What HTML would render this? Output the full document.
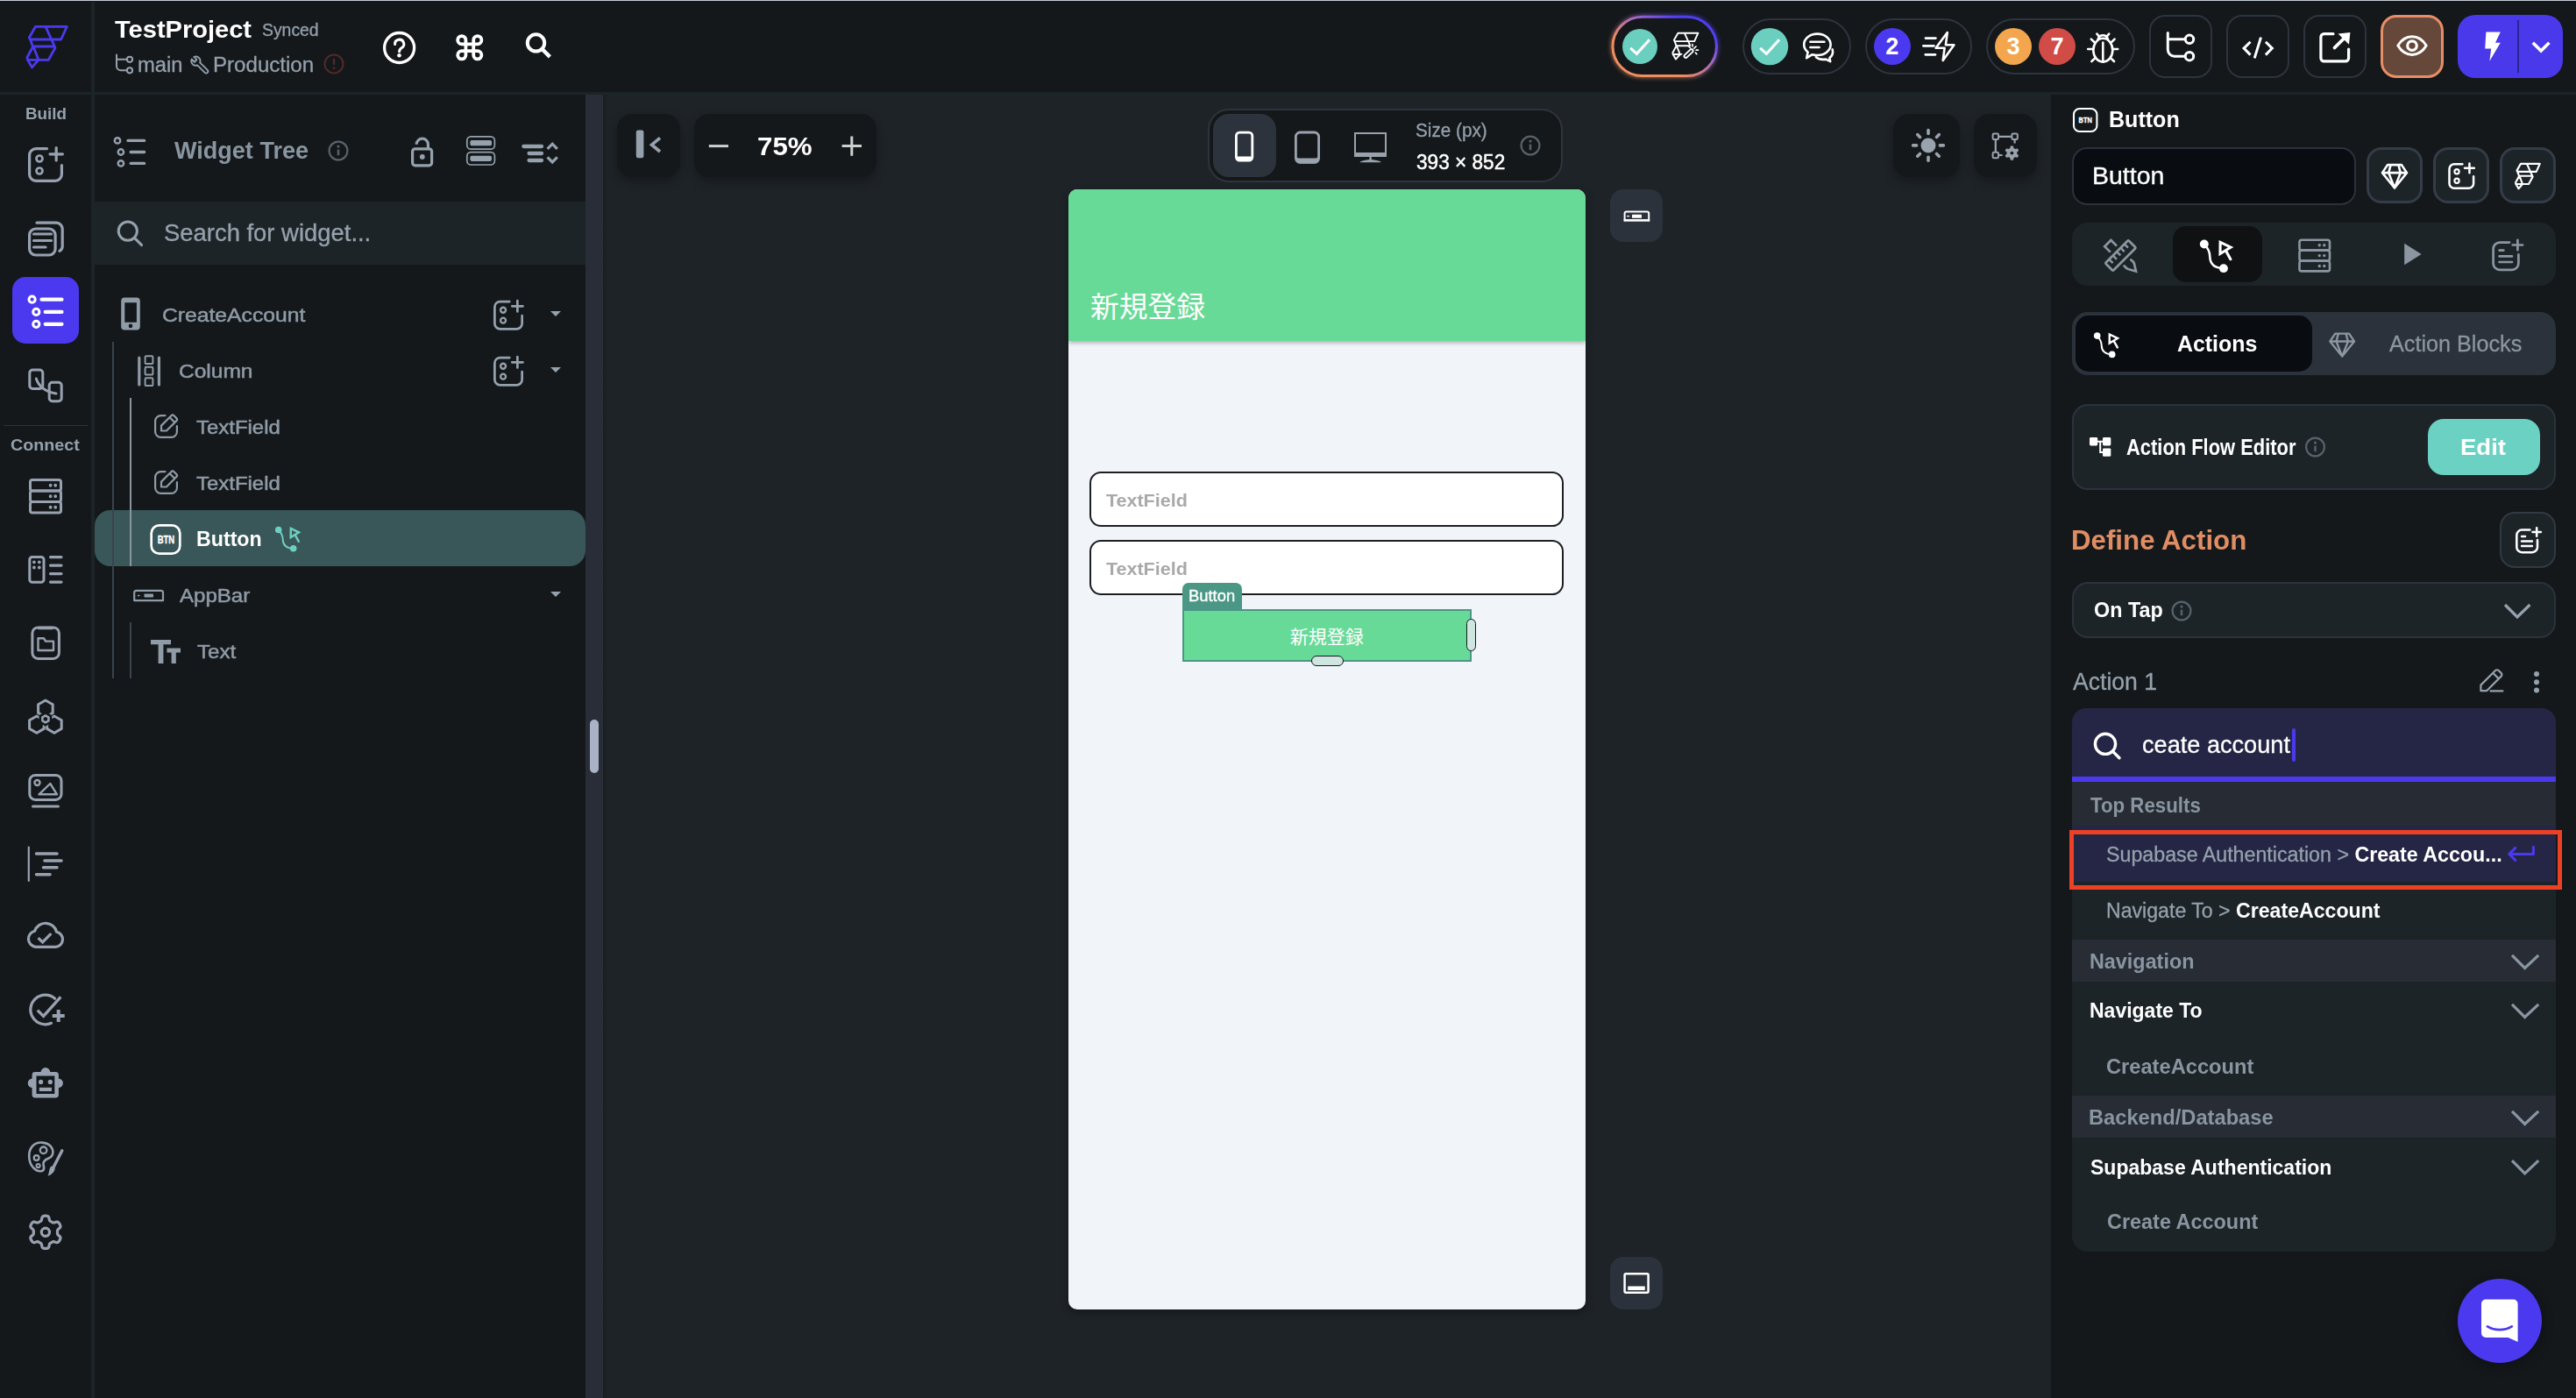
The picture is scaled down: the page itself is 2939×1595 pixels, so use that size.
<!DOCTYPE html>
<html lang="ja"><head><meta charset="utf-8"><title>FlutterFlow - TestProject</title>
<style>
html,body{margin:0;padding:0;}
body{width:2939px;height:1595px;overflow:hidden;background:#14181b;position:relative;font-family:"Liberation Sans",sans-serif;}
.b{position:absolute;}
.t{position:absolute;white-space:nowrap;}
#ic{position:absolute;left:0;top:0;}
</style></head><body>
<div class="b" style="left:0px;top:0px;width:2939px;height:1.2px;background:#c3cad2;"></div>
<div class="b" style="left:104px;top:1.5px;width:4px;height:1594px;background:#1d2428;"></div>
<div class="b" style="left:0px;top:105px;width:2939px;height:3px;background:#1d2428;"></div>
<div class="b" style="left:668px;top:108px;width:1672px;height:1487px;background:#1e2328;"></div>
<div class="b" style="left:668px;top:108px;width:20px;height:1487px;background:#282d37;"></div>
<div class="b" style="left:688px;top:108px;width:6px;height:1487px;background:linear-gradient(90deg,rgba(0,0,0,.14),rgba(0,0,0,0));"></div>
<div class="b" style="left:673px;top:821px;width:10px;height:61px;background:#aab3c5;border-radius:5px;"></div>
<div class="b" style="left:2340px;top:108px;width:599px;height:1487px;background:#14181b;"></div>
<div class="b" style="left:14px;top:316px;width:76px;height:76px;background:#4b39ef;border-radius:15px;"></div>
<div class="b" style="left:4px;top:484.5px;width:96px;height:1.6px;background:#2b323b;"></div>
<div class="b" style="left:108px;top:230px;width:560px;height:72px;background:#1d2428;"></div>
<div class="b" style="left:108px;top:582px;width:560px;height:64px;background:#395659;border-radius:18px 18px 18px 18px;"></div>
<div class="b" style="left:128.2px;top:390px;width:2px;height:384px;background:#3a434e;"></div>
<div class="b" style="left:148.3px;top:454px;width:2px;height:192px;background:#8a94a0;"></div>
<div class="b" style="left:148.3px;top:710px;width:2px;height:64px;background:#3a434e;"></div>
<div class="b" style="left:704px;top:130px;width:72px;height:72px;background:#14181b;border-radius:17px;box-shadow:0 5px 12px rgba(0,0,0,.28);"></div>
<div class="b" style="left:792px;top:130px;width:208px;height:72px;background:#14181b;border-radius:17px;box-shadow:0 5px 12px rgba(0,0,0,.28);"></div>
<div class="b" style="left:2160px;top:130px;width:76px;height:72px;background:#14181b;border-radius:18px;box-shadow:0 5px 12px rgba(0,0,0,.28);"></div>
<div class="b" style="left:2252px;top:130px;width:72px;height:72px;background:#14181b;border-radius:18px;box-shadow:0 5px 12px rgba(0,0,0,.28);"></div>
<div class="b" style="left:1378px;top:124px;width:405px;height:84px;background:#14181b;border-radius:24px;border:2px solid #2e343d;box-sizing:border-box;"></div>
<div class="b" style="left:1383.5px;top:130px;width:72px;height:72px;background:#2d333d;border-radius:18px;"></div>
<div class="b" style="left:1837px;top:216px;width:60px;height:60px;background:#2c323c;border-radius:15px;"></div>
<div class="b" style="left:1837px;top:1434px;width:60px;height:60px;background:#2c323c;border-radius:15px;"></div>
<div class="b" style="left:1219px;top:216px;width:590px;height:1278px;background:#f1f4f8;border-radius:10px;box-shadow:0 3px 10px rgba(0,0,0,.35);overflow:hidden;"><div style="position:absolute;left:0;top:0;width:590px;height:172.5px;background:#68da97;box-shadow:0 2px 5px rgba(0,0,0,.3)"></div></div>
<div class="b" style="left:1243px;top:538px;width:541px;height:63px;background:#fff;border-radius:13px;border:2px solid #1c1f22;box-sizing:border-box;"></div>
<div class="b" style="left:1243px;top:616px;width:541px;height:63px;background:#fff;border-radius:13px;border:2px solid #1c1f22;box-sizing:border-box;"></div>
<div class="b" style="left:1349px;top:664.5px;width:67.5px;height:32px;background:#4b9786;border-radius:7px 7px 0 0;"></div>
<div class="b" style="left:1349px;top:694.5px;width:330px;height:60px;background:#68da97;border:2.5px solid #4b9786;box-sizing:border-box;"></div>
<div class="b" style="left:1672.5px;top:706px;width:11.5px;height:37px;background:#cfe5e0;border-radius:6px;border:1.5px solid #0f1a1a;box-sizing:border-box;"></div>
<div class="b" style="left:1495.5px;top:748px;width:37px;height:11.5px;background:#cfe5e0;border-radius:6px;border:1.5px solid #0f1a1a;box-sizing:border-box;"></div>
<div class="b" style="left:1988px;top:21px;width:124px;height:64px;border-radius:32px;border:2px solid #2d343d;box-sizing:border-box;"></div>
<div class="b" style="left:2128px;top:21px;width:122px;height:64px;border-radius:32px;border:2px solid #2d343d;box-sizing:border-box;"></div>
<div class="b" style="left:2266px;top:21px;width:170px;height:64px;border-radius:32px;border:2px solid #2d343d;box-sizing:border-box;"></div>
<div class="b" style="left:2452px;top:17px;width:72px;height:72px;border-radius:18px;border:2px solid #2d343d;box-sizing:border-box;"></div>
<div class="b" style="left:2540px;top:17px;width:72px;height:72px;border-radius:18px;border:2px solid #2d343d;box-sizing:border-box;"></div>
<div class="b" style="left:2628px;top:17px;width:72px;height:72px;border-radius:18px;border:2px solid #2d343d;box-sizing:border-box;"></div>
<div class="b" style="left:2716px;top:17px;width:72px;height:72px;background:#65483a;border-radius:18px;border:3px solid #e88e66;box-sizing:border-box;"></div>
<div class="b" style="left:2804px;top:17px;width:120px;height:72px;background:#4939ea;border-radius:20px;"></div>
<div class="b" style="left:2872px;top:22.5px;width:2px;height:60px;background:#2c2494;"></div>
<div class="b" style="left:2137.8px;top:31.9px;width:42px;height:42px;background:#4b39ef;border-radius:21px;"></div>
<div class="b" style="left:2276px;top:31.9px;width:42px;height:42px;background:#f3a64e;border-radius:21px;"></div>
<div class="b" style="left:2326px;top:31.9px;width:42px;height:42px;background:#d14c47;border-radius:21px;"></div>
<div class="b" style="left:2364px;top:168px;width:324px;height:65.5px;background:#090d11;border-radius:17px;border:2px solid #2b323b;box-sizing:border-box;"></div>
<div class="b" style="left:2700px;top:168px;width:64px;height:64px;background:#1d2428;border-radius:17px;border:3px solid #353c47;box-sizing:border-box;"></div>
<div class="b" style="left:2776px;top:168px;width:64px;height:64px;background:#1d2428;border-radius:17px;border:3px solid #353c47;box-sizing:border-box;"></div>
<div class="b" style="left:2852px;top:168px;width:64px;height:64px;background:#1d2428;border-radius:17px;border:3px solid #353c47;box-sizing:border-box;"></div>
<div class="b" style="left:2364px;top:254px;width:552px;height:72px;background:#1d2428;border-radius:18px;"></div>
<div class="b" style="left:2478.5px;top:258px;width:102.5px;height:64px;background:#0f1113;border-radius:15px;"></div>
<div class="b" style="left:2364px;top:356px;width:552px;height:72px;background:#2c323b;border-radius:18px;"></div>
<div class="b" style="left:2368px;top:360px;width:270px;height:64px;background:#090c10;border-radius:15px;"></div>
<div class="b" style="left:2364px;top:460.5px;width:552px;height:98.5px;background:#1d2428;border-radius:18px;border:2px solid #2b323b;box-sizing:border-box;"></div>
<div class="b" style="left:2770px;top:478px;width:128px;height:64px;background:#6bd1c2;border-radius:18px;"></div>
<div class="b" style="left:2852px;top:584px;width:64px;height:64px;background:#1d2428;border-radius:17px;border:2.5px solid #323943;box-sizing:border-box;"></div>
<div class="b" style="left:2364px;top:664px;width:552px;height:64px;background:#1d2428;border-radius:18px;border:2px solid #2b323b;box-sizing:border-box;"></div>
<div class="b" style="left:2364px;top:808px;width:552px;height:620px;background:#1d2428;border-radius:16px 16px 18px 18px;overflow:hidden;"><div style="position:absolute;left:0;top:0;width:552px;height:78px;background:#252645"></div><div style="position:absolute;left:0;top:78px;width:552px;height:6px;background:#4b39ef"></div><div style="position:absolute;left:0;top:84px;width:552px;height:50px;background:#272c34"></div><div style="position:absolute;left:0;top:134px;width:552px;height:64px;background:#252645"></div><div style="position:absolute;left:0;top:263.5px;width:552px;height:48.5px;background:#272c35"></div><div style="position:absolute;left:0;top:442px;width:552px;height:48px;background:#272c35"></div></div>
<div class="b" style="left:2615.3px;top:831px;width:3.6px;height:37.5px;background:#4b39ef;border-radius:2px;"></div>
<div class="b" style="left:2361px;top:947px;width:562px;height:68px;border:5px solid #ec4125;box-sizing:border-box;"></div>
<div class="b" style="left:2804px;top:1458.6px;width:96px;height:96px;background:#4b39ef;border-radius:48px;box-shadow:0 3px 14px rgba(0,0,0,.3);"></div>
<div class="t" style="top:20px;font-size:28px;line-height:28px;color:#fff;font-weight:700;left:131.00px;transform:scaleX(1.0371);transform-origin:0 50%;"><span id="t_proj">TestProject</span></div>
<div class="t" style="top:24px;font-size:20px;line-height:20px;color:#95a1ac;-webkit-text-stroke:0.3px #95a1ac;left:299.17px;transform:scaleX(0.9691);transform-origin:0 50%;"><span id="t_sync">Synced</span></div>
<div class="t" style="top:63px;font-size:23.5px;line-height:23.5px;color:#95a1ac;-webkit-text-stroke:0.3px #95a1ac;left:157.36px;transform:scaleX(1.0107);transform-origin:0 50%;"><span id="t_main">main</span></div>
<div class="t" style="top:63px;font-size:23.5px;line-height:23.5px;color:#95a1ac;-webkit-text-stroke:0.3px #95a1ac;left:242.68px;transform:scaleX(1.0249);transform-origin:0 50%;"><span id="t_prod">Production</span></div>
<div class="t" style="top:120px;font-size:19px;line-height:19px;color:#95a1ac;font-weight:700;left:28.90px;transform:scaleX(0.9890);transform-origin:0 50%;"><span id="t_build">Build</span></div>
<div class="t" style="top:498px;font-size:19px;line-height:19px;color:#95a1ac;font-weight:700;left:12.19px;transform:scaleX(1.0370);transform-origin:0 50%;"><span id="t_conn">Connect</span></div>
<div class="t" style="top:159px;font-size:27px;line-height:27px;color:#8995a0;font-weight:700;left:199.00px;transform:scaleX(1.0015);transform-origin:0 50%;"><span id="t_wt">Widget Tree</span></div>
<div class="t" style="top:253px;font-size:27px;line-height:27px;color:#95a1ac;-webkit-text-stroke:0.3px #95a1ac;left:187.19px;transform:scaleX(1.0156);transform-origin:0 50%;"><span id="t_sfw">Search for widget...</span></div>
<div class="t" style="top:349px;font-size:22px;line-height:22px;color:#8f9ba6;-webkit-text-stroke:0.5px #8f9ba6;left:185.42px;transform:scaleX(1.1222);transform-origin:0 50%;"><span id="t_r1">CreateAccount</span></div>
<div class="t" style="top:413px;font-size:22px;line-height:22px;color:#8f9ba6;-webkit-text-stroke:0.5px #8f9ba6;left:204.39px;transform:scaleX(1.1139);transform-origin:0 50%;"><span id="t_r2">Column</span></div>
<div class="t" style="top:477px;font-size:22px;line-height:22px;color:#8f9ba6;-webkit-text-stroke:0.5px #8f9ba6;left:224.00px;transform:scaleX(1.0882);transform-origin:0 50%;"><span id="t_r3">TextField</span></div>
<div class="t" style="top:541px;font-size:22px;line-height:22px;color:#8f9ba6;-webkit-text-stroke:0.5px #8f9ba6;left:224.00px;transform:scaleX(1.0882);transform-origin:0 50%;"><span id="t_r4">TextField</span></div>
<div class="t" style="top:604px;font-size:23px;line-height:23px;color:#fff;font-weight:700;left:223.92px;transform:scaleX(1.0086);transform-origin:0 50%;"><span id="t_r5">Button</span></div>
<div class="t" style="top:669px;font-size:22px;line-height:22px;color:#8f9ba6;-webkit-text-stroke:0.5px #8f9ba6;left:204.98px;transform:scaleX(1.0934);transform-origin:0 50%;"><span id="t_r6">AppBar</span></div>
<div class="t" style="top:733px;font-size:22px;line-height:22px;color:#8f9ba6;-webkit-text-stroke:0.5px #8f9ba6;left:224.76px;transform:scaleX(1.0963);transform-origin:0 50%;"><span id="t_r7">Text</span></div>
<div class="t" style="top:152px;font-size:29.5px;line-height:29.5px;color:#fff;font-weight:700;left:864.43px;transform:scaleX(1.0604);transform-origin:0 50%;"><span id="t_zoom">75%</span></div>
<div class="t" style="top:139px;font-size:21.5px;line-height:21.5px;color:#95a1ac;-webkit-text-stroke:0.3px #95a1ac;left:1614.67px;transform:scaleX(0.9624);transform-origin:0 50%;"><span id="t_size">Size (px)</span></div>
<div class="t" style="top:174px;font-size:23px;line-height:23px;color:#fff;-webkit-text-stroke:0.5px #fff;left:1615.50px;transform:scaleX(0.9838);transform-origin:0 50%;"><span id="t_dim">393 &#215; 852</span></div>
<div class="t" style="top:335px;font-size:32.8px;line-height:32.8px;color:#fff;letter-spacing:-0.062px;font-family:'Liberation Sans','Noto Sans CJK JP',sans-serif;left:1244.00px;"><span id="t_appbar">新規登録</span></div>
<div class="t" style="top:561px;font-size:20px;line-height:20px;color:#a9a9a9;font-weight:700;left:1262.00px;transform:scaleX(1.0753);transform-origin:0 50%;"><span id="t_tf1">TextField</span></div>
<div class="t" style="top:639px;font-size:20px;line-height:20px;color:#a9a9a9;font-weight:700;left:1262.00px;transform:scaleX(1.0753);transform-origin:0 50%;"><span id="t_tf2">TextField</span></div>
<div class="t" style="top:672px;font-size:17.5px;line-height:17.5px;color:#fff;-webkit-text-stroke:0.35px #fff;left:1355.64px;transform:scaleX(1.0502);transform-origin:0 50%;"><span id="t_tag">Button</span></div>
<div class="t" style="top:716px;font-size:21px;line-height:21px;color:#fff;font-family:'Liberation Sans','Noto Sans CJK JP',sans-serif;left:1471.80px;"><span id="t_btn">新規登録</span></div>
<div class="t" style="top:124px;font-size:25px;line-height:25px;color:#fff;font-weight:700;left:2405.92px;transform:scaleX(1.0022);transform-origin:0 50%;"><span id="t_hdr">Button</span></div>
<div class="t" style="top:188px;font-size:27px;line-height:27px;color:#fff;-webkit-text-stroke:0.3px #fff;left:2387.32px;transform:scaleX(1.0547);transform-origin:0 50%;"><span id="t_inp">Button</span></div>
<div class="t" style="top:379px;font-size:26px;line-height:26px;color:#fff;font-weight:700;left:2484.00px;transform:scaleX(0.9576);transform-origin:0 50%;"><span id="t_act">Actions</span></div>
<div class="t" style="top:379px;font-size:26px;line-height:26px;color:#8b96a1;-webkit-text-stroke:0.3px #8b96a1;left:2726.02px;transform:scaleX(0.9693);transform-origin:0 50%;"><span id="t_ab">Action Blocks</span></div>
<div class="t" style="top:498px;font-size:25px;line-height:25px;color:#fff;font-weight:700;left:2426.02px;transform:scaleX(0.8762);transform-origin:0 50%;"><span id="t_afe">Action Flow Editor</span></div>
<div class="t" style="top:497px;font-size:26.5px;line-height:26.5px;color:#fff;font-weight:700;left:2807.24px;transform:scaleX(1.0393);transform-origin:0 50%;"><span id="t_edit">Edit</span></div>
<div class="t" style="top:601px;font-size:31px;line-height:31px;color:#e08d63;font-weight:700;left:2363.37px;transform:scaleX(1.0081);transform-origin:0 50%;"><span id="t_def">Define Action</span></div>
<div class="t" style="top:685px;font-size:23.5px;line-height:23.5px;color:#fff;font-weight:700;left:2389.18px;transform:scaleX(0.9929);transform-origin:0 50%;"><span id="t_tap">On Tap</span></div>
<div class="t" style="top:765px;font-size:27px;line-height:27px;color:#95a1ac;-webkit-text-stroke:0.3px #95a1ac;left:2364.76px;transform:scaleX(0.9844);transform-origin:0 50%;"><span id="t_a1">Action 1</span></div>
<div class="t" style="top:836px;font-size:27.5px;line-height:27.5px;color:#fff;-webkit-text-stroke:0.3px #fff;left:2443.70px;transform:scaleX(0.9865);transform-origin:0 50%;"><span id="t_q">ceate account</span></div>
<div class="t" style="top:908px;font-size:23px;line-height:23px;color:#8995a0;font-weight:700;left:2384.50px;transform:scaleX(0.9682);transform-origin:0 50%;"><span id="t_top">Top Results</span></div>
<div class="t" style="top:964px;font-size:23px;line-height:23px;color:#95a1ac;left:2403.20px;transform:scaleX(1.0096);transform-origin:0 50%;"><span id="t_l1"><span style="-webkit-text-stroke:.3px #95a1ac">Supabase Authentication &gt; </span><b style="color:#fff">Create Accou...</b></span></div>
<div class="t" style="top:1028px;font-size:23px;line-height:23px;color:#95a1ac;left:2403.20px;transform:scaleX(1.0053);transform-origin:0 50%;"><span id="t_l2"><span style="-webkit-text-stroke:.3px #95a1ac">Navigate To &gt; </span><b style="color:#fff">CreateAccount</b></span></div>
<div class="t" style="top:1086px;font-size:23px;line-height:23px;color:#8995a0;font-weight:700;left:2384.18px;transform:scaleX(1.0159);transform-origin:0 50%;"><span id="t_nav">Navigation</span></div>
<div class="t" style="top:1142px;font-size:23px;line-height:23px;color:#fff;font-weight:700;left:2384.18px;transform:scaleX(0.9997);transform-origin:0 50%;"><span id="t_nt">Navigate To</span></div>
<div class="t" style="top:1206px;font-size:23px;line-height:23px;color:#8995a0;font-weight:700;left:2403.20px;transform:scaleX(1.0288);transform-origin:0 50%;"><span id="t_ca">CreateAccount</span></div>
<div class="t" style="top:1264px;font-size:23px;line-height:23px;color:#8995a0;font-weight:700;left:2383.41px;transform:scaleX(1.0297);transform-origin:0 50%;"><span id="t_bd">Backend/Database</span></div>
<div class="t" style="top:1321px;font-size:23px;line-height:23px;color:#fff;font-weight:700;left:2385.00px;transform:scaleX(1.0004);transform-origin:0 50%;"><span id="t_sa">Supabase Authentication</span></div>
<div class="t" style="top:1383px;font-size:23px;line-height:23px;color:#8995a0;font-weight:700;left:2403.69px;transform:scaleX(1.0187);transform-origin:0 50%;"><span id="t_ca2">Create Account</span></div>
<div class="t" style="top:40px;font-size:27px;line-height:27px;color:#fff;font-weight:700;left:1858.8000000000002px;width:600px;text-align:center;"><span id="t_n2">2</span></div>
<div class="t" style="top:40px;font-size:27px;line-height:27px;color:#fff;font-weight:700;left:1997px;width:600px;text-align:center;"><span id="t_n3">3</span></div>
<div class="t" style="top:40px;font-size:27px;line-height:27px;color:#fff;font-weight:700;left:2047px;width:600px;text-align:center;"><span id="t_n7">7</span></div>
<svg id="ic" width="2939" height="1595" viewBox="0 0 2939 1595" fill="none" stroke-linecap="round" stroke-linejoin="round" font-family="Liberation Sans, sans-serif">
<defs>
<linearGradient id="pg" x1="0" y1="1" x2="1" y2="0"><stop offset="0" stop-color="#f0905f"/><stop offset=".33" stop-color="#ee8b60"/><stop offset=".62" stop-color="#9a63c8"/><stop offset=".8" stop-color="#5340f0"/><stop offset="1" stop-color="#4b39ef"/></linearGradient>
<filter id="bl" x="-20%" y="-30%" width="140%" height="160%"><feGaussianBlur stdDeviation="2.6"/></filter>
</defs>
<path d="M40.5 30.3H76.3L69.7 45H34.5L33.3 43Z M52 30.3L63 54.5 55.4 68.3H31.5L31 65.5 37.5 53.3 34.5 45 M37.5 53H62.3 M39 55.5L44 68.3 36.5 76.9 31.5 68.3" stroke="#4b39ef" stroke-width="2.8" fill="none" />
<g transform="translate(32 168) scale(1.0)">
<path d="M21.5 1.6H9A7.4 7.4 0 0 0 1.6 9V31A7.4 7.4 0 0 0 9 38.4H31A7.4 7.4 0 0 0 38.4 31V20.5" stroke="#98a1b0" stroke-width="3.2" fill="none" />
<circle cx="13" cy="13" r="3.5" stroke="#98a1b0" stroke-width="2.72" fill="none" />
<circle cx="13" cy="27" r="3.5" stroke="#98a1b0" stroke-width="2.72" fill="none" />
<path d="M32.2 .6V15 M25 7.8H39.4" stroke="#98a1b0" stroke-width="3.2" fill="none" />
</g>
<g transform="translate(563 342.7) scale(0.85)">
<path d="M21.5 1.6H9A7.4 7.4 0 0 0 1.6 9V31A7.4 7.4 0 0 0 9 38.4H31A7.4 7.4 0 0 0 38.4 31V20.5" stroke="#95a1ac" stroke-width="3.2" fill="none" />
<circle cx="13" cy="13" r="3.5" stroke="#95a1ac" stroke-width="2.72" fill="none" />
<circle cx="13" cy="27" r="3.5" stroke="#95a1ac" stroke-width="2.72" fill="none" />
<path d="M32.2 .6V15 M25 7.8H39.4" stroke="#95a1ac" stroke-width="3.2" fill="none" />
</g>
<g transform="translate(563 406.7) scale(0.85)">
<path d="M21.5 1.6H9A7.4 7.4 0 0 0 1.6 9V31A7.4 7.4 0 0 0 9 38.4H31A7.4 7.4 0 0 0 38.4 31V20.5" stroke="#95a1ac" stroke-width="3.2" fill="none" />
<circle cx="13" cy="13" r="3.5" stroke="#95a1ac" stroke-width="2.72" fill="none" />
<circle cx="13" cy="27" r="3.5" stroke="#95a1ac" stroke-width="2.72" fill="none" />
<path d="M32.2 .6V15 M25 7.8H39.4" stroke="#95a1ac" stroke-width="3.2" fill="none" />
</g>
<g transform="translate(2793.3 186) scale(0.75)">
<path d="M21.5 1.6H9A7.4 7.4 0 0 0 1.6 9V31A7.4 7.4 0 0 0 9 38.4H31A7.4 7.4 0 0 0 38.4 31V20.5" stroke="#fff" stroke-width="3.3600000000000003" fill="none" />
<circle cx="13" cy="13" r="3.5" stroke="#fff" stroke-width="2.8560000000000003" fill="none" />
<circle cx="13" cy="27" r="3.5" stroke="#fff" stroke-width="2.8560000000000003" fill="none" />
<path d="M32.2 .6V15 M25 7.8H39.4" stroke="#fff" stroke-width="3.3600000000000003" fill="none" />
</g>
<rect x="33.6" y="261" width="29.5" height="30" rx="7" stroke="#98a1b0" stroke-width="3.2" fill="none" />
<path d="M42 254.2H64.5A7 7 0 0 1 71.2 261V281A6 6 0 0 1 68 286.3" stroke="#98a1b0" stroke-width="3.2" fill="none" />
<path d="M38.5 267H58.5 M38.5 274.5H58.5 M38.5 282H52" stroke="#98a1b0" stroke-width="3.2" fill="none" />
<circle cx="36.6" cy="341.7" r="3.6" stroke="#fff" stroke-width="3" fill="none" />
<circle cx="41.3" cy="355.9" r="3.6" stroke="#fff" stroke-width="3" fill="none" />
<circle cx="41.3" cy="369.8" r="3.6" stroke="#fff" stroke-width="3" fill="none" />
<path d="M47.5 341.7H70.5 M51.7 355.9H70.5 M51.7 369.8H70.5" stroke="#fff" stroke-width="4.2" fill="none" />
<circle cx="134" cy="160.4" r="3.2" stroke="#95a1ac" stroke-width="2.4" fill="none" />
<circle cx="137.9" cy="173.5" r="3.2" stroke="#95a1ac" stroke-width="2.4" fill="none" />
<circle cx="137.9" cy="186.4" r="3.2" stroke="#95a1ac" stroke-width="2.4" fill="none" />
<path d="M146 160.4H164.6 M149.2 173.5H164.6 M149.2 186.4H164.6" stroke="#95a1ac" stroke-width="3.4" fill="none" />
<rect x="33.8" y="422" width="15" height="21.5" rx="3.5" stroke="#98a1b0" stroke-width="3" fill="none" />
<rect x="56.2" y="436.2" width="14" height="21.5" rx="3.5" stroke="#98a1b0" stroke-width="3" fill="none" />
<path d="M41.3 432Q46 446 64 449" stroke="#98a1b0" stroke-width="3" fill="none" />
<rect x="34.5" y="547.5" width="35" height="12.5" rx="2.5" stroke="#98a1b0" stroke-width="3" fill="none" />
<path d="M57.6 553.75m-1.9 0a1.9 1.9 0 1 0 3.8 0a1.9 1.9 0 1 0 -3.8 0 M63.2 553.75m-1.9 0a1.9 1.9 0 1 0 3.8 0a1.9 1.9 0 1 0 -3.8 0" fill="#98a1b0" stroke="none" />
<rect x="34.5" y="560.0" width="35" height="12.5" rx="2.5" stroke="#98a1b0" stroke-width="3" fill="none" />
<path d="M57.6 566.25m-1.9 0a1.9 1.9 0 1 0 3.8 0a1.9 1.9 0 1 0 -3.8 0 M63.2 566.25m-1.9 0a1.9 1.9 0 1 0 3.8 0a1.9 1.9 0 1 0 -3.8 0" fill="#98a1b0" stroke="none" />
<rect x="34.5" y="572.5" width="35" height="12.5" rx="2.5" stroke="#98a1b0" stroke-width="3" fill="none" />
<path d="M57.6 578.75m-1.9 0a1.9 1.9 0 1 0 3.8 0a1.9 1.9 0 1 0 -3.8 0 M63.2 578.75m-1.9 0a1.9 1.9 0 1 0 3.8 0a1.9 1.9 0 1 0 -3.8 0" fill="#98a1b0" stroke="none" />
<rect x="2623.5" y="273.8" width="34.5" height="11.866666666666667" rx="2.5" stroke="#8b96a1" stroke-width="2.6" fill="none" />
<path d="M2646.27 279.73333333333335m-1.7 0a1.7 1.7 0 1 0 3.4 0a1.7 1.7 0 1 0 -3.4 0 M2651.79 279.73333333333335m-1.7 0a1.7 1.7 0 1 0 3.4 0a1.7 1.7 0 1 0 -3.4 0" fill="#8b96a1" stroke="none" />
<rect x="2623.5" y="285.6666666666667" width="34.5" height="11.866666666666667" rx="2.5" stroke="#8b96a1" stroke-width="2.6" fill="none" />
<path d="M2646.27 291.6m-1.7 0a1.7 1.7 0 1 0 3.4 0a1.7 1.7 0 1 0 -3.4 0 M2651.79 291.6m-1.7 0a1.7 1.7 0 1 0 3.4 0a1.7 1.7 0 1 0 -3.4 0" fill="#8b96a1" stroke="none" />
<rect x="2623.5" y="297.53333333333336" width="34.5" height="11.866666666666667" rx="2.5" stroke="#8b96a1" stroke-width="2.6" fill="none" />
<path d="M2646.27 303.4666666666667m-1.7 0a1.7 1.7 0 1 0 3.4 0a1.7 1.7 0 1 0 -3.4 0 M2651.79 303.4666666666667m-1.7 0a1.7 1.7 0 1 0 3.4 0a1.7 1.7 0 1 0 -3.4 0" fill="#8b96a1" stroke="none" />
<rect x="33.8" y="635.5" width="16.2" height="28.8" rx="3" stroke="#98a1b0" stroke-width="3" fill="none" />
<path d="M38.9 641.3m-1.9 0a1.9 1.9 0 1 0 3.8 0a1.9 1.9 0 1 0 -3.8 0 M44.8 641.3m-1.9 0a1.9 1.9 0 1 0 3.8 0a1.9 1.9 0 1 0 -3.8 0 M38.9 647.5m-1.9 0a1.9 1.9 0 1 0 3.8 0a1.9 1.9 0 1 0 -3.8 0 M44.8 647.5m-1.9 0a1.9 1.9 0 1 0 3.8 0a1.9 1.9 0 1 0 -3.8 0" fill="#98a1b0" stroke="none" />
<path d="M57.5 635.6H70 M57.5 645.1H70 M57.5 654.6H70 M57.5 664.1H70" stroke="#98a1b0" stroke-width="3.2" fill="none" />
<rect x="36.9" y="715.9" width="30.5" height="35.5" rx="6.5" stroke="#98a1b0" stroke-width="3" fill="none" />
<path d="M44.5 716.5H59.5" stroke="#98a1b0" stroke-width="3.4" fill="none" />
<path d="M43.5 742V728.2H50L52 731.6H61V742Z" stroke="#98a1b0" stroke-width="2.4" fill="none" />
<path d="M51.9 799.0L60.2 803.8L60.2 813.4L51.9 818.2L43.6 813.4L43.6 803.8Z" stroke="#98a1b0" stroke-width="3" fill="none" />
<path d="M41.9 817.0L50.2 821.8L50.2 831.4L41.9 836.2L33.6 831.4L33.6 821.8Z" stroke="#98a1b0" stroke-width="3" fill="none" />
<path d="M61.9 817.0L70.2 821.8L70.2 831.4L61.9 836.2L53.6 831.4L53.6 821.8Z" stroke="#98a1b0" stroke-width="3" fill="none" />
<path d="M51.9 813.7L57.6 817.0L57.6 823.6L51.9 826.9L46.2 823.6L46.2 817.0Z" stroke="#14181b" stroke-width="3.4" fill="#14181b" />
<path d="M51.9 816.3L55.4 818.3L55.4 822.3L51.9 824.3L48.4 822.3L48.4 818.3Z" stroke="#98a1b0" stroke-width="2.6" fill="none" />
<rect x="33.8" y="884.4" width="36.2" height="28" rx="6.5" stroke="#98a1b0" stroke-width="3" fill="none" />
<circle cx="42.5" cy="893" r="3" stroke="#98a1b0" stroke-width="2.4" fill="none" />
<path d="M44.5 906.3L57.3 894 65 906.3Z" stroke="#98a1b0" stroke-width="2.4" fill="none" />
<path d="M37.5 920H66.5" stroke="#98a1b0" stroke-width="3" fill="none" />
<path d="M32.8 966.5V1005" stroke="#98a1b0" stroke-width="2.2" fill="none" />
<path d="M41.5 974H65 M51 982H70 M49.5 989.8H65 M41.5 997.8H57" stroke="#98a1b0" stroke-width="3.6" fill="none" />
<path d="M40.5 1080.3H63.5A8.6 8.6 0 0 0 64.6 1063.3A13 13 0 0 0 39.6 1062.2A9.2 9.2 0 0 0 40.5 1080.3Z" stroke="#98a1b0" stroke-width="3.2" fill="none" />
<path d="M43.6 1070.2L48.6 1075 58.3 1065.2" stroke="#98a1b0" stroke-width="3.2" fill="none" stroke-linecap="butt" stroke-linejoin="miter"/>
<path d="M62.6 1139.2A16.8 16.8 0 1 0 58.5 1167.3" stroke="#98a1b0" stroke-width="3.2" fill="none" />
<path d="M42.8 1152.6L49.6 1159.4 69.3 1137.4" stroke="#98a1b0" stroke-width="3.4" fill="none" stroke-linecap="butt" stroke-linejoin="miter"/>
<path d="M66.7 1152V1166 M59.7 1159H73.7" stroke="#98a1b0" stroke-width="4" fill="none" stroke-linecap="butt"/>
<path d="M40 1223H63.5A3.4 3.4 0 0 1 66.9 1226.4V1249A3.4 3.4 0 0 1 63.5 1252.4H40A3.4 3.4 0 0 1 36.6 1249V1226.4A3.4 3.4 0 0 1 40 1223Z M41.5 1227.5V1248H62.3V1227.5Z" fill="#98a1b0" stroke="none" fill-rule="evenodd"/>
<path d="M46.5 1223.5A5.4 5.4 0 0 1 57.3 1223.5Z" fill="#98a1b0" stroke="none" />
<path d="M37 1230.5A5.3 5.3 0 0 0 37 1241.1Z M66.6 1230.5A5.3 5.3 0 0 1 66.6 1241.1Z" fill="#98a1b0" stroke="none" />
<circle cx="46.6" cy="1234.4" r="2.6" stroke="none" stroke-width="0" fill="#98a1b0" />
<circle cx="57.3" cy="1234.4" r="2.6" stroke="none" stroke-width="0" fill="#98a1b0" />
<path d="M44.8 1240.8H59V1245H44.8Z" fill="#98a1b0" stroke="none" />
<path d="M48.5 1303.6C38 1302.5 33 1311 33.2 1319.5C33.5 1330 40.5 1336.5 46.5 1336.3C51.5 1336 50 1331 49.5 1328.5C49 1324.5 52 1322.8 55.5 1321.5C60 1319.8 61.5 1315.5 59.8 1311C58 1306.5 53.5 1304 48.5 1303.6Z" stroke="#98a1b0" stroke-width="2.6" fill="none" />
<circle cx="49.6" cy="1312.3" r="3.8" stroke="#98a1b0" stroke-width="2.3" fill="none" />
<circle cx="41.6" cy="1321" r="2.9" stroke="#98a1b0" stroke-width="2.2" fill="none" />
<circle cx="43.6" cy="1330" r="2.1" stroke="#98a1b0" stroke-width="2" fill="none" />
<path d="M70.8 1312.8L61.6 1330.6" stroke="#98a1b0" stroke-width="3.4" fill="none" />
<path d="M58.6 1330.6C61 1329.8 63.2 1331.4 62.6 1334C61.6 1338.2 57.6 1341 54.6 1341.4C56.4 1338.4 55.6 1333 58.6 1330.6Z" fill="#98a1b0" stroke="none" />
<path d="M51.9 1387.2L52.7 1387.2L53.5 1387.3L54.3 1387.5L55.1 1387.9L55.7 1388.8L56.1 1390.2L56.3 1391.7L56.7 1392.6L57.2 1393.1L57.7 1393.4L58.2 1393.7L58.7 1394.0L59.2 1394.3L59.7 1394.6L60.3 1394.9L60.9 1395.0L61.9 1394.9L63.3 1394.4L64.7 1394.0L65.8 1394.1L66.5 1394.6L67.1 1395.2L67.6 1395.8L68.0 1396.5L68.4 1397.2L68.7 1398.0L68.9 1398.7L69.0 1399.6L68.5 1400.6L67.5 1401.6L66.3 1402.6L65.7 1403.4L65.5 1404.0L65.5 1404.6L65.5 1405.2L65.5 1405.8L65.5 1406.4L65.5 1407.0L65.5 1407.6L65.7 1408.2L66.3 1409.0L67.5 1410.0L68.5 1411.0L69.0 1412.0L68.9 1412.9L68.7 1413.6L68.4 1414.4L68.0 1415.1L67.6 1415.8L67.1 1416.4L66.5 1417.0L65.8 1417.5L64.7 1417.6L63.3 1417.2L61.9 1416.7L60.9 1416.6L60.3 1416.7L59.7 1417.0L59.2 1417.3L58.7 1417.6L58.2 1417.9L57.7 1418.2L57.2 1418.5L56.7 1419.0L56.3 1419.9L56.1 1421.4L55.7 1422.8L55.1 1423.7L54.3 1424.1L53.5 1424.3L52.7 1424.4L51.9 1424.4L51.1 1424.4L50.3 1424.3L49.5 1424.1L48.7 1423.7L48.1 1422.8L47.7 1421.4L47.5 1419.9L47.1 1419.0L46.6 1418.5L46.1 1418.2L45.6 1417.9L45.1 1417.6L44.6 1417.3L44.1 1417.0L43.5 1416.7L42.9 1416.6L41.9 1416.7L40.5 1417.2L39.1 1417.6L38.0 1417.5L37.3 1417.0L36.7 1416.4L36.2 1415.8L35.8 1415.1L35.4 1414.4L35.1 1413.6L34.9 1412.9L34.8 1412.0L35.3 1411.0L36.3 1410.0L37.5 1409.0L38.1 1408.2L38.3 1407.6L38.3 1407.0L38.3 1406.4L38.3 1405.8L38.3 1405.2L38.3 1404.6L38.3 1404.0L38.1 1403.4L37.5 1402.6L36.3 1401.6L35.3 1400.6L34.8 1399.6L34.9 1398.7L35.1 1398.0L35.4 1397.2L35.8 1396.5L36.2 1395.8L36.7 1395.2L37.3 1394.6L38.0 1394.1L39.1 1394.0L40.5 1394.4L41.9 1394.9L42.9 1395.0L43.5 1394.9L44.1 1394.6L44.6 1394.3L45.1 1394.0L45.6 1393.7L46.1 1393.4L46.6 1393.1L47.1 1392.6L47.5 1391.7L47.7 1390.2L48.1 1388.8L48.7 1387.9L49.5 1387.5L50.3 1387.3L51.1 1387.2L51.9 1387.2Z" stroke="#98a1b0" stroke-width="3.2" fill="none" />
<circle cx="51.9" cy="1405.8" r="4.6" stroke="#98a1b0" stroke-width="3.2" fill="none" />
<path d="M133 62.6V75.3A5 5 0 0 0 138 80.3H144.6 M133 67.8H144.6" stroke="#95a1ac" stroke-width="2" fill="none" />
<circle cx="148" cy="67.8" r="3.1" stroke="#95a1ac" stroke-width="2" fill="none" />
<circle cx="148" cy="80.3" r="3.1" stroke="#95a1ac" stroke-width="2" fill="none" />
<path d="M226.4 72.6L235.2 81.4" stroke="#95a1ac" stroke-width="6" fill="none" />
<path d="M226.4 72.6L235.2 81.4" stroke="#14181b" stroke-width="2.4" fill="none" />
<path d="M221.32 64.84A5.2 5.2 0 1 1 218.64 67.52L221.85 70.73 224.53 68.05Z" stroke="#95a1ac" stroke-width="1.9" fill="#14181b" />
<path d="M225.6 71.8L227.6 73.8" stroke="#14181b" stroke-width="2.4" fill="none" />
<circle cx="381" cy="72.9" r="10.5" stroke="#532929" stroke-width="2" fill="none" />
<path d="M381 66.9V73.9" stroke="#532929" stroke-width="2.4" fill="none" stroke-linecap="butt"/>
<rect x="379.8" y="76.4" width="2.4" height="2.5" rx="0" stroke="none" stroke-width="0" fill="#532929" />
<circle cx="455.6" cy="54.5" r="17" stroke="#fff" stroke-width="3.3" fill="none" />
<path d="M450.6 50.6A5.1 5.1 0 1 1 458.4 54.6C456.4 55.9 455.6 56.8 455.6 58.8" stroke="#fff" stroke-width="3" fill="none" />
<circle cx="455.5" cy="63.2" r="2.3" stroke="none" stroke-width="0" fill="#fff" />
<path d="M531.4 50.3V45.699999999999996A4.6 4.6 0 1 0 526.8 50.3H544.8000000000001A4.6 4.6 0 1 0 540.2 45.699999999999996V62.800000000000004A4.6 4.6 0 1 0 544.8000000000001 58.2H526.8A4.6 4.6 0 1 0 531.4 62.800000000000004Z" stroke="#fff" stroke-width="3.8" fill="none" />
<circle cx="611.5" cy="48.9" r="9.7" stroke="#fff" stroke-width="4" fill="none" />
<path d="M618.8 56.3L627.4 64.9" stroke="#fff" stroke-width="4.4" fill="none" stroke-linecap="butt"/>
<rect x="1840" y="19.2" width="118.4" height="67.4" rx="33.7" stroke="url(#pg)" stroke-width="4" filter="url(#bl)" opacity=".75"/>
<rect x="1840" y="19.2" width="118.4" height="67.4" rx="33.7" stroke="url(#pg)" stroke-width="3" fill="#14181b"/>
<circle cx="1871" cy="53.1" r="20" stroke="none" stroke-width="0" fill="#6bcfc0" />
<path d="M1860.2 54.8L1867.4 61.4 1882 45.2" stroke="#fff" stroke-width="3.1" fill="none" stroke-linecap="butt" stroke-linejoin="miter"/>
<circle cx="2019" cy="53.1" r="21.2" stroke="none" stroke-width="0" fill="#6bcfc0" />
<path d="M2008.2 54.8L2015.4 61.4 2030 45.2" stroke="#fff" stroke-width="3.1" fill="none" stroke-linecap="butt" stroke-linejoin="miter"/>
<g transform="translate(1908.4 37.7) scale(.64) translate(-31 -30.3)">
<path d="M40.5 30.3H76.3L69.7 45H34.5L33.3 43Z M52 30.3L63 54.5 55.4 68.3H31.5L31 65.5 37.5 53.3 34.5 45 M37.5 53H62.3 M39 55.5L44 68.3 36.5 76.9 31.5 68.3" stroke="#fff" stroke-width="3" fill="none" />
</g>
<path d="M1921.6 66L1937.5 51" stroke="#14181b" stroke-width="9.5" fill="none" stroke-linecap="butt"/>
<path d="M1923.4 64L1929.8 58" stroke="#fff" stroke-width="5.6" fill="none" />
<path d="M1923.4 64L1929.8 58" stroke="#14181b" stroke-width="1.8" fill="none" />
<path d="M1932.8 55.2L1935 53 M1931 52.8V50.6 M1935.2 57.2H1937.4 M1928.4 54.6L1926.8 53 M1934.4 60.2L1935.8 61.6" stroke="#fff" stroke-width="1.7" fill="none" />
<path d="M2073.4 38.6C2082 38.6 2088.6 44 2088.6 50.8C2088.6 57.6 2082 63 2073.4 63C2071.4 63 2069.5 62.7 2067.7 62.2L2061.2 66.2 2062.6 59.4C2059.8 57.2 2058.2 54.2 2058.2 50.8C2058.2 44 2064.8 38.6 2073.4 38.6Z" stroke="#fff" stroke-width="2.6" fill="none" />
<path d="M2065.4 47.8H2081.4 M2065.4 54H2075.6" stroke="#fff" stroke-width="2.6" fill="none" />
<path d="M2090.6 56.4C2092 61 2090 64.2 2087.4 66L2088.2 70.2 2083.2 67.6C2078.8 68.4 2074.6 67.4 2072 65.2" stroke="#fff" stroke-width="2.6" fill="none" />
<path d="M2197 43.6H2208.4 M2194.4 52.3H2206.4 M2196.8 62.3H2208" stroke="#fff" stroke-width="2.8" fill="none" />
<path d="M2221.8 37L2208.6 54.8H2218.6L2216.7 69L2229.4 51.2H2219.9Z" stroke="#fff" stroke-width="2.6" fill="none" />
<ellipse cx="2399.3" cy="57.2" rx="11" ry="13.4" stroke="#fff" stroke-width="2.6"/>
<path d="M2393.6 44.6C2394.6 41.2 2397 40.2 2399.3 40.2C2401.6 40.2 2404 41.2 2405 44.6" stroke="#fff" stroke-width="2.4" fill="none" />
<path d="M2392.4 38.6L2395.2 41.8 M2406.2 38.6L2403.4 41.8 M2399.3 48.6V70.6 M2382.2 56H2388 M2410.8 56H2416.2 M2385.8 44.6L2389.6 48.2 M2412.6 44.6L2409 48.2 M2386.4 70L2390.2 66.4 M2412 70L2408.2 66.4" stroke="#fff" stroke-width="2.6" fill="none" />
<path d="M2473.3 37.6V56.6A7.6 7.6 0 0 0 2480.9 64.2H2492.6 M2473.3 44.8H2492.6" stroke="#fff" stroke-width="3" fill="none" />
<circle cx="2498" cy="44.8" r="4.7" stroke="#fff" stroke-width="3" fill="none" />
<circle cx="2498" cy="64.2" r="4.7" stroke="#fff" stroke-width="3" fill="none" />
<path d="M2567.5 47.7L2560.1 55.1 2567.5 62.6 M2579.5 42.6L2572.2 66.4 M2584.9 47.7L2592.3 55.1 2584.9 62.6" stroke="#fff" stroke-width="3" fill="none" stroke-linecap="butt" stroke-linejoin="miter"/>
<path d="M2662 38.7H2651.5A3.6 3.6 0 0 0 2647.9 42.3V66.2A3.6 3.6 0 0 0 2651.5 69.8H2676A3.6 3.6 0 0 0 2679.6 66.2V56" stroke="#fff" stroke-width="3.2" fill="none" />
<path d="M2663.4 54.6L2675.5 42.6" stroke="#fff" stroke-width="3.6" fill="none" />
<path d="M2667.6 38.4L2681.4 37 2680 50.8Z" fill="#fff" stroke="none" />
<path d="M2735.8 52.1C2744 38.4 2760 38.4 2768.2 52.1C2760 65.8 2744 65.8 2735.8 52.1Z" stroke="#fff" stroke-width="3" fill="none" />
<circle cx="2752" cy="52.1" r="5.3" stroke="#fff" stroke-width="3.2" fill="none" />
<path d="M2836.4 36.6H2852.8L2847 48.8H2852.8L2840.4 69.8 2842.2 55.6H2835.2Z" fill="#fff" stroke="none" />
<path d="M2889.8 48.8L2899.1 58 2908.4 48.8" stroke="#fff" stroke-width="3.7" fill="none" stroke-linecap="butt" stroke-linejoin="miter"/>
<circle cx="386" cy="172" r="10.4" stroke="#57636c" stroke-width="2.2" fill="none" />
<path d="M386 170.6V177.2" stroke="#57636c" stroke-width="2.5" fill="none" stroke-linecap="butt"/>
<circle cx="386" cy="167.1" r="1.55" stroke="none" stroke-width="0" fill="#57636c" />
<circle cx="1746" cy="166" r="10.4" stroke="#57636c" stroke-width="2.2" fill="none" />
<path d="M1746 164.6V171.2" stroke="#57636c" stroke-width="2.5" fill="none" stroke-linecap="butt"/>
<circle cx="1746" cy="161.1" r="1.55" stroke="none" stroke-width="0" fill="#57636c" />
<circle cx="2641.5" cy="510" r="10.4" stroke="#57636c" stroke-width="2.2" fill="none" />
<path d="M2641.5 508.6V515.2" stroke="#57636c" stroke-width="2.5" fill="none" stroke-linecap="butt"/>
<circle cx="2641.5" cy="505.1" r="1.55" stroke="none" stroke-width="0" fill="#57636c" />
<circle cx="2489" cy="697" r="10.4" stroke="#57636c" stroke-width="2.2" fill="none" />
<path d="M2489 695.6V702.2" stroke="#57636c" stroke-width="2.5" fill="none" stroke-linecap="butt"/>
<circle cx="2489" cy="692.1" r="1.55" stroke="none" stroke-width="0" fill="#57636c" />
<rect x="470.6" y="169.8" width="22" height="19" rx="3" stroke="#95a1ac" stroke-width="3.2" fill="none" />
<path d="M475.2 164.8A6.6 6.6 0 0 1 488.4 164.8V169" stroke="#95a1ac" stroke-width="3.2" fill="none" stroke-linecap="butt"/>
<circle cx="481.8" cy="178.9" r="2.9" stroke="none" stroke-width="0" fill="#95a1ac" />
<rect x="532.8" y="155.8" width="31.6" height="14.4" rx="4.5" stroke="#95a1ac" stroke-width="1.7" fill="none" />
<rect x="532.8" y="173.6" width="31.6" height="14.4" rx="4.5" stroke="#95a1ac" stroke-width="1.7" fill="none" />
<rect x="536.4" y="160" width="24.6" height="6.2" rx="1.8" stroke="none" stroke-width="0" fill="#95a1ac" />
<rect x="536.4" y="177.7" width="24.6" height="6.2" rx="1.8" stroke="none" stroke-width="0" fill="#95a1ac" />
<path d="M597.4 167H618 M603.6 175H618 M603.6 183H618" stroke="#95a1ac" stroke-width="4.3" fill="none" />
<path d="M624.6 169.8L630.2 164.2 635.8 169.8 M624.6 179.4L630.2 185 635.8 179.4" stroke="#95a1ac" stroke-width="3.2" fill="none" stroke-linecap="butt" stroke-linejoin="miter"/>
<circle cx="145.8" cy="263.6" r="10.6" stroke="#95a1ac" stroke-width="3" fill="none" />
<path d="M153.6 271.6L161.6 279.6" stroke="#95a1ac" stroke-width="3" fill="none" />
<path d="M142.2 339.4H155.8A4 4 0 0 1 159.8 343.4V372.4A4 4 0 0 1 155.8 376.4H142.2A4 4 0 0 1 138.2 372.4V343.4A4 4 0 0 1 142.2 339.4Z M142.3 345.2V367.8H155.9V345.2Z M149 369.6A2.3 2.3 0 1 0 149 374.2A2.3 2.3 0 1 0 149 369.6Z" fill="#8f9ba6" stroke="none" fill-rule="evenodd"/>
<path d="M628 355H640L634 361Z" fill="#95a1ac" stroke="none" />
<path d="M628 419H640L634 425Z" fill="#95a1ac" stroke="none" />
<path d="M628 675H640L634 681Z" fill="#95a1ac" stroke="none" />
<path d="M158.8 408.2V439 M181.4 408.2V439" stroke="#8f9ba6" stroke-width="3.2" fill="none" />
<rect x="165.6" y="406.3" width="8.8" height="8.8" rx="1.2" stroke="#8f9ba6" stroke-width="2" fill="none" />
<rect x="165.6" y="418.8" width="8.8" height="8.8" rx="1.2" stroke="#8f9ba6" stroke-width="2" fill="none" />
<rect x="165.6" y="431.3" width="8.8" height="8.8" rx="1.2" stroke="#8f9ba6" stroke-width="2" fill="none" />
<path d="M188.5 474.1H183.5A6.4 6.4 0 0 0 177.1 480.5V492.5A6.4 6.4 0 0 0 183.5 498.9H195.5A6.4 6.4 0 0 0 201.9 492.5V486" stroke="#8f9ba6" stroke-width="2.2" fill="none" />
<path d="M184 485.6L195.4 474.2A2.2 2.2 0 0 1 198.5 474.2L201.3 477A2.2 2.2 0 0 1 201.3 480.1L189.9 491.5H184Z M193.6 476.2L199.4 482" stroke="#8f9ba6" stroke-width="2.2" fill="none" />
<path d="M188.5 538.1H183.5A6.4 6.4 0 0 0 177.1 544.5V556.5A6.4 6.4 0 0 0 183.5 562.9H195.5A6.4 6.4 0 0 0 201.9 556.5V550" stroke="#8f9ba6" stroke-width="2.2" fill="none" />
<path d="M184 549.6L195.4 538.2A2.2 2.2 0 0 1 198.5 538.2L201.3 541A2.2 2.2 0 0 1 201.3 544.1L189.9 555.5H184Z M193.6 540.2L199.4 546" stroke="#8f9ba6" stroke-width="2.2" fill="none" />
<rect x="172.7" y="599.3" width="32.6" height="32.4" rx="9" stroke="#fff" stroke-width="2.7" fill="none" />
<text x="179.7" y="619.8" font-size="12.7" font-weight="700" fill="#fff" stroke="#fff" stroke-width=".45" textLength="19.4" lengthAdjust="spacingAndGlyphs">BTN</text>
<g transform="translate(314 600) scale(1.0)">
<circle cx="3.7" cy="4.5" r="3.8" stroke="none" stroke-width="0" fill="#6dd0c0" />
<circle cx="20.7" cy="25.8" r="3.8" stroke="none" stroke-width="0" fill="#6dd0c0" />
<path d="M3.7 4.5C7 8 8.6 11 8.7 15.5C8.8 21 12 25.6 20.7 25.8" stroke="#6dd0c0" stroke-width="1.95" fill="none" />
<path d="M17.8 2.9L27 7.3 17.7 13Z M22.6 10.2L26.8 17.8" stroke="#6dd0c0" stroke-width="2.4" fill="none" stroke-linejoin="miter" stroke-miterlimit="6"/>
</g>
<path d="M153.2 685.2V676.2A2.4 2.4 0 0 1 155.6 673.8H183.6A2.4 2.4 0 0 1 186 676.2V685.2Z" stroke="#8f9ba6" stroke-width="2.2" fill="none" />
<rect x="164.5" y="677.6" width="10.5" height="3.8" rx="0.6" stroke="none" stroke-width="0" fill="#8f9ba6" />
<path d="M157.4 679.5H159" stroke="#8f9ba6" stroke-width="1.3" fill="none" />
<path d="M172 730H195V735.2H186.4V757H180.6V735.2H172Z M190.4 739.6H206V744.4H200.8V757H195.6V744.4H190.4Z" fill="#8f9ba6" stroke="none" />
<rect x="725.8" y="148.6" width="8.6" height="31.6" rx="2.2" stroke="none" stroke-width="0" fill="#95a1ac" />
<path d="M753 157.3L743.6 165.2 753 173" stroke="#95a1ac" stroke-width="3.7" fill="none" stroke-linecap="butt" stroke-linejoin="miter"/>
<path d="M808.8 166.6H831" stroke="#cfcfcf" stroke-width="3" fill="none" stroke-linecap="butt"/>
<path d="M960.6 166.6H983 M971.8 155.4V177.8" stroke="#cfcfcf" stroke-width="3" fill="none" stroke-linecap="butt"/>
<path d="M1410.4 155A3.8 3.8 0 0 1 1414.2 151.2H1425A3.8 3.8 0 0 1 1428.8 155V179.2A3.8 3.8 0 0 1 1425 183H1414.2A3.8 3.8 0 0 1 1410.4 179.2Z" stroke="#fff" stroke-width="2.8" fill="none" />
<path d="M1410.4 178.4H1428.8V180A3.8 3.8 0 0 1 1425 183.6H1414.2A3.8 3.8 0 0 1 1410.4 180Z" fill="#fff" stroke="none" />
<path d="M1478.4 156A5 5 0 0 1 1483.4 151H1499.6A5 5 0 0 1 1504.6 156V180.4A5 5 0 0 1 1499.6 185.4H1483.4A5 5 0 0 1 1478.4 180.4Z" stroke="#99a2ad" stroke-width="2.8" fill="none" />
<path d="M1478.4 178.6C1479.4 180 1480.6 180.4 1482 180.4H1501C1502.4 180.4 1503.6 180 1504.6 178.6V181A5 5 0 0 1 1499.6 186.4H1483.4A5 5 0 0 1 1478.4 181Z" fill="#99a2ad" stroke="none" />
<path d="M1546 152H1581V178H1546Z" stroke="#99a2ad" stroke-width="2" fill="none" stroke-linejoin="miter"/>
<path d="M1545 174H1582V179H1545Z" fill="#99a2ad" stroke="none" />
<path d="M1562.4 179H1564.8V182C1569 182.4 1573.5 183.4 1575.4 184.6V185.2H1551.8V184.6C1553.8 183.4 1558.2 182.4 1562.4 182Z" fill="#99a2ad" stroke="none" />
<circle cx="2200" cy="165.9" r="8.5" stroke="none" stroke-width="0" fill="#99a2ad" />
<path d="M2200.0 152.5L2200.0 148.5" stroke="#99a2ad" stroke-width="3.6" fill="none" />
<path d="M2209.5 156.4L2212.3 153.6" stroke="#99a2ad" stroke-width="3.6" fill="none" />
<path d="M2213.4 165.9L2217.4 165.9" stroke="#99a2ad" stroke-width="3.6" fill="none" />
<path d="M2209.5 175.4L2212.3 178.2" stroke="#99a2ad" stroke-width="3.6" fill="none" />
<path d="M2200.0 179.3L2200.0 183.3" stroke="#99a2ad" stroke-width="3.6" fill="none" />
<path d="M2190.5 175.4L2187.7 178.2" stroke="#99a2ad" stroke-width="3.6" fill="none" />
<path d="M2186.6 165.9L2182.6 165.9" stroke="#99a2ad" stroke-width="3.6" fill="none" />
<path d="M2190.5 156.4L2187.7 153.6" stroke="#99a2ad" stroke-width="3.6" fill="none" />
<path d="M2280.6 155.8H2294.8 M2276.8 159.6V173.2 M2298.6 159.6V163.6 M2280.6 177H2284.6" stroke="#99a2ad" stroke-width="2.2" fill="none" stroke-linecap="butt"/>
<rect x="2273.6000000000004" y="152.60000000000002" width="6.4" height="6.4" rx="1.2" stroke="#99a2ad" stroke-width="2" fill="none" />
<rect x="2295.4" y="152.60000000000002" width="6.4" height="6.4" rx="1.2" stroke="#99a2ad" stroke-width="2" fill="none" />
<rect x="2273.6000000000004" y="173.8" width="6.4" height="6.4" rx="1.2" stroke="#99a2ad" stroke-width="2" fill="none" />
<path d="M2295.4 166.4L2295.8 166.4L2296.1 166.5L2296.5 166.5L2296.8 166.7L2297.1 167.1L2297.2 167.8L2297.3 168.5L2297.5 168.9L2297.6 169.2L2297.9 169.3L2298.1 169.5L2298.3 169.6L2298.5 169.7L2298.7 169.8L2299.0 169.9L2299.3 170.0L2299.7 169.9L2300.3 169.7L2301.0 169.4L2301.5 169.5L2301.8 169.7L2302.1 169.9L2302.3 170.2L2302.5 170.5L2302.7 170.8L2302.8 171.1L2302.9 171.5L2302.9 171.9L2302.7 172.3L2302.2 172.8L2301.6 173.2L2301.3 173.6L2301.2 173.8L2301.2 174.1L2301.2 174.3L2301.2 174.6L2301.2 174.9L2301.2 175.1L2301.2 175.4L2301.3 175.6L2301.6 176.0L2302.2 176.4L2302.7 176.9L2302.9 177.3L2302.9 177.7L2302.8 178.1L2302.7 178.4L2302.5 178.7L2302.3 179.0L2302.1 179.3L2301.8 179.5L2301.5 179.7L2301.0 179.8L2300.3 179.5L2299.7 179.3L2299.3 179.2L2299.0 179.3L2298.7 179.4L2298.5 179.5L2298.3 179.6L2298.1 179.7L2297.9 179.9L2297.6 180.0L2297.5 180.3L2297.3 180.7L2297.2 181.4L2297.1 182.1L2296.8 182.5L2296.5 182.7L2296.1 182.7L2295.8 182.8L2295.4 182.8L2295.0 182.8L2294.7 182.7L2294.3 182.7L2294.0 182.5L2293.7 182.1L2293.6 181.4L2293.5 180.7L2293.3 180.3L2293.2 180.0L2292.9 179.9L2292.7 179.7L2292.5 179.6L2292.3 179.5L2292.1 179.4L2291.8 179.3L2291.5 179.2L2291.1 179.3L2290.5 179.5L2289.8 179.8L2289.3 179.7L2289.0 179.5L2288.7 179.3L2288.5 179.0L2288.3 178.7L2288.1 178.4L2288.0 178.1L2287.9 177.7L2287.9 177.3L2288.1 176.9L2288.6 176.4L2289.2 176.0L2289.5 175.6L2289.6 175.4L2289.6 175.1L2289.6 174.9L2289.6 174.6L2289.6 174.3L2289.6 174.1L2289.6 173.8L2289.5 173.6L2289.2 173.2L2288.6 172.8L2288.1 172.3L2287.9 171.9L2287.9 171.5L2288.0 171.1L2288.1 170.8L2288.3 170.5L2288.5 170.2L2288.7 169.9L2289.0 169.7L2289.3 169.5L2289.8 169.4L2290.5 169.7L2291.1 169.9L2291.5 170.0L2291.8 169.9L2292.1 169.8L2292.3 169.7L2292.5 169.6L2292.7 169.5L2292.9 169.3L2293.2 169.2L2293.3 168.9L2293.5 168.5L2293.6 167.8L2293.7 167.1L2294.0 166.7L2294.3 166.5L2294.7 166.5L2295.0 166.4L2295.4 166.4Z" stroke="#99a2ad" stroke-width="0.1" fill="#99a2ad" />
<circle cx="2295.4" cy="174.6" r="1.9" stroke="none" stroke-width="0" fill="#14181b" />
<path d="M1853.6 251.6V243.6A2 2 0 0 1 1855.6 241.6H1879.2A2 2 0 0 1 1881.2 243.6V251.6" stroke="#fff" stroke-width="2" fill="none" />
<path d="M1852.6 251.4H1882.2" stroke="#fff" stroke-width="2.6" fill="none" stroke-linecap="butt"/>
<rect x="1862" y="244.8" width="11" height="4" rx="0.6" stroke="none" stroke-width="0" fill="#fff" />
<path d="M1856.6 246.7H1858.6" stroke="#fff" stroke-width="1.2" fill="none" />
<rect x="1853.6" y="1453.2" width="27" height="21.6" rx="1.5" stroke="#fff" stroke-width="2.5" fill="none" />
<rect x="1857.2" y="1467.4" width="19.6" height="4.6" rx="0.4" stroke="none" stroke-width="0" fill="#fff" />
<rect x="2366" y="124" width="26.4" height="26" rx="6.5" stroke="#fff" stroke-width="2.1" fill="none" />
<text x="2371.6" y="140.4" font-size="9.9" font-weight="700" fill="#fff" stroke="#fff" stroke-width=".45" textLength="15.2" lengthAdjust="spacingAndGlyphs">BTN</text>
<g transform="translate(2717 186.9) scale(1.0)">
<path d="M7 1.2H23L29 10.2 15 27.6 1 10.2Z M1 10.2H29 M10.6 1.2L8.2 10.2 15 27.6 21.8 10.2 19.4 1.2" stroke="#fff" stroke-width="2.6" fill="none" />
</g>
<g transform="translate(2657.4 379.4) scale(0.9866666666666667)">
<path d="M7 1.2H23L29 10.2 15 27.6 1 10.2Z M1 10.2H29 M10.6 1.2L8.2 10.2 15 27.6 21.8 10.2 19.4 1.2" stroke="#8b96a1" stroke-width="2.4" fill="none" />
</g>
<g transform="translate(2869.5 186) scale(.61)"><g transform="translate(-30 -28.9)">
<path d="M40.5 30.3H76.3L69.7 45H34.5L33.3 43Z M52 30.3L63 54.5 55.4 68.3H31.5L31 65.5 37.5 53.3 34.5 45 M37.5 53H62.3 M39 55.5L44 68.3 36.5 76.9 31.5 68.3" stroke="#fff" stroke-width="3.5" fill="none" />
</g></g>
<g transform="rotate(-45 2419.4 291.5)">
<rect x="2400.9" y="285.4" width="37" height="12.2" rx="1" stroke="#8b96a1" stroke-width="2.7" fill="none" />
<path d="M2407.1 285.6V291.4 M2413.2 285.6V291.4 M2419.4 285.6V291.4 M2425.6 285.6V291.4 M2431.7 285.6V291.4" stroke="#8b96a1" stroke-width="2.5" fill="none" stroke-linecap="butt"/>
</g>
<path d="M2415 280.6L2408.4 274 2401.2 281.2 2407.8 287.6" stroke="#8b96a1" stroke-width="2.7" fill="none" stroke-linecap="butt" stroke-linejoin="miter"/>
<path d="M2431.2 296.4C2433 297.6 2434.2 298.8 2434.9 300.6L2437 309.5 2428 307C2426 306.2 2424.8 305 2423.6 303.4" stroke="#8b96a1" stroke-width="2.7" fill="none" stroke-linejoin="miter"/>
<g transform="translate(2510 272.6) scale(1.3)">
<circle cx="3.7" cy="4.5" r="3.8" stroke="none" stroke-width="0" fill="#fff" />
<circle cx="20.7" cy="25.8" r="3.8" stroke="none" stroke-width="0" fill="#fff" />
<path d="M3.7 4.5C7 8 8.6 11 8.7 15.5C8.8 21 12 25.6 20.7 25.8" stroke="#fff" stroke-width="1.95" fill="none" />
<path d="M17.8 2.9L27 7.3 17.7 13Z M22.6 10.2L26.8 17.8" stroke="#fff" stroke-width="2.4" fill="none" stroke-linejoin="miter" stroke-miterlimit="6"/>
</g>
<path d="M2743.2 277.8L2762.6 290 2743.2 302.2Z" fill="#8b96a1" stroke="none" />
<g transform="translate(2843 273) scale(1.0)">
<path d="M20 3.6H9A7.4 7.4 0 0 0 1.6 11V27.4A7.4 7.4 0 0 0 9 34.8H23A7.4 7.4 0 0 0 30.4 27.4V17.4" stroke="#8b96a1" stroke-width="2.7" fill="none" />
<path d="M29.4 .8V12.2 M23.7 6.5H35.1" stroke="#8b96a1" stroke-width="2.7" fill="none" />
<path d="M8.6 12.6H13.4 M8.6 19.4H23 M8.6 26H23" stroke="#8b96a1" stroke-width="2.7" fill="none" />
</g>
<g transform="translate(2870 601.6) scale(0.8222222222222223)">
<path d="M20 3.6H9A7.4 7.4 0 0 0 1.6 11V27.4A7.4 7.4 0 0 0 9 34.8H23A7.4 7.4 0 0 0 30.4 27.4V17.4" stroke="#fff" stroke-width="3.1" fill="none" />
<path d="M29.4 .8V12.2 M23.7 6.5H35.1" stroke="#fff" stroke-width="3.1" fill="none" />
<path d="M8.6 12.6H13.4 M8.6 19.4H23 M8.6 26H23" stroke="#fff" stroke-width="3.1" fill="none" />
</g>
<g transform="translate(2389 378.6) scale(1.0)">
<circle cx="3.7" cy="4.5" r="3.8" stroke="none" stroke-width="0" fill="#fff" />
<circle cx="20.7" cy="25.8" r="3.8" stroke="none" stroke-width="0" fill="#fff" />
<path d="M3.7 4.5C7 8 8.6 11 8.7 15.5C8.8 21 12 25.6 20.7 25.8" stroke="#fff" stroke-width="1.95" fill="none" />
<path d="M17.8 2.9L27 7.3 17.7 13Z M22.6 10.2L26.8 17.8" stroke="#fff" stroke-width="2.4" fill="none" stroke-linejoin="miter" stroke-miterlimit="6"/>
</g>
<rect x="2384" y="499" width="9.2" height="9.4" rx="1.4" stroke="none" stroke-width="0" fill="#fff" />
<rect x="2399" y="499" width="9.3" height="9.4" rx="1.4" stroke="none" stroke-width="0" fill="#fff" />
<rect x="2399" y="511.4" width="9.3" height="9.4" rx="1.4" stroke="none" stroke-width="0" fill="#fff" />
<path d="M2392 503.7H2400 M2396.2 503.7V516.1H2400" stroke="#fff" stroke-width="2" fill="none" stroke-linecap="butt" stroke-linejoin="miter"/>
<path d="M2858 690L2872 704 2886.4 690" stroke="#95a1ac" stroke-width="3.2" fill="none" stroke-linecap="butt" stroke-linejoin="miter"/>
<path d="M2830.4 788.2V781.6L2847 765A2.6 2.6 0 0 1 2850.7 765L2853.6 767.9A2.6 2.6 0 0 1 2853.6 771.6L2837 788.2Z M2844.2 767.8L2850.8 774.4" stroke="#95a1ac" stroke-width="2.2" fill="none" />
<path d="M2841.5 788.4H2855.4" stroke="#95a1ac" stroke-width="2.2" fill="none" />
<circle cx="2894" cy="769" r="3" stroke="none" stroke-width="0" fill="#95a1ac" />
<circle cx="2894" cy="778.3" r="3" stroke="none" stroke-width="0" fill="#95a1ac" />
<circle cx="2894" cy="787.6" r="3" stroke="none" stroke-width="0" fill="#95a1ac" />
<circle cx="2402" cy="848.8" r="11.6" stroke="#fff" stroke-width="3.4" fill="none" />
<path d="M2410.6 857.4L2418 864.8" stroke="#fff" stroke-width="3.4" fill="none" />
<path d="M2890.4 966.2V974.4H2863.4 M2869.8 967.4L2862.8 974.4 2869.8 981.4" stroke="#4b39ef" stroke-width="3" fill="none" />
<path d="M2866 1089.8L2880.6 1104.4 2896.2 1089.8" stroke="#8995a0" stroke-width="3.2" fill="none" stroke-linecap="butt" stroke-linejoin="miter"/>
<path d="M2866 1145.8L2880.6 1160.4 2896.2 1145.8" stroke="#8995a0" stroke-width="3.2" fill="none" stroke-linecap="butt" stroke-linejoin="miter"/>
<path d="M2866 1267.8L2880.6 1282.4 2896.2 1267.8" stroke="#8995a0" stroke-width="3.2" fill="none" stroke-linecap="butt" stroke-linejoin="miter"/>
<path d="M2866 1324.2L2880.6 1338.8000000000002 2896.2 1324.2" stroke="#8995a0" stroke-width="3.2" fill="none" stroke-linecap="butt" stroke-linejoin="miter"/>
<path d="M2836 1482.6H2867.6A5 5 0 0 1 2872.6 1487.6V1531L2861.6 1526H2836A5 5 0 0 1 2831 1521V1487.6A5 5 0 0 1 2836 1482.6Z" fill="#fff" stroke="none" />
<path d="M2838 1513.4C2846 1518.4 2857.6 1518.4 2865.8 1513.4" stroke="#4b39ef" stroke-width="2.8" fill="none" />
</svg>
</body></html>
